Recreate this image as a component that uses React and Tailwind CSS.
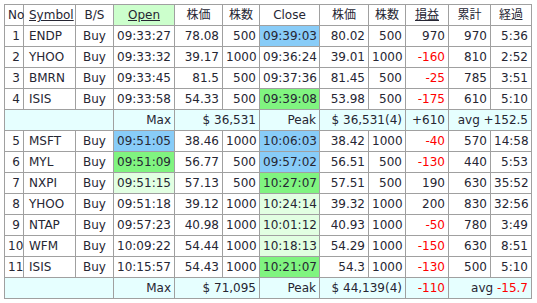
import React from "react";

const BLUE = "bg-[#88ccf8]";
const GREEN = "bg-[#80f480]";
const LIGHT = "bg-[#e2ffe2]";

const block1 = [
  { no: 1, sym: "ENDP", open: "09:33:27", op: "78.08", oq: 500, close: "09:39:03", cbg: BLUE, cp: "80.02", cq: 500, pl: 970, cum: 970, el: "5:36" },
  { no: 2, sym: "YHOO", open: "09:33:32", op: "39.17", oq: 1000, close: "09:36:24", cp: "39.01", cq: 1000, pl: -160, cum: 810, el: "2:52" },
  { no: 3, sym: "BMRN", open: "09:33:45", op: "81.5", oq: 500, close: "09:37:36", cp: "81.45", cq: 500, pl: -25, cum: 785, el: "3:51" },
  { no: 4, sym: "ISIS", open: "09:33:58", op: "54.33", oq: 500, close: "09:39:08", cbg: GREEN, cp: "53.98", cq: 500, pl: -175, cum: 610, el: "5:10" },
];

const block2 = [
  { no: 5, sym: "MSFT", open: "09:51:05", obg: BLUE, op: "38.46", oq: 1000, close: "10:06:03", cbg: BLUE, cp: "38.42", cq: 1000, pl: -40, cum: 570, el: "14:58" },
  { no: 6, sym: "MYL", open: "09:51:09", obg: GREEN, op: "56.77", oq: 500, close: "09:57:02", cbg: BLUE, cp: "56.51", cq: 500, pl: -130, cum: 440, el: "5:53" },
  { no: 7, sym: "NXPI", open: "09:51:15", obg: LIGHT, op: "57.13", oq: 500, close: "10:27:07", cbg: GREEN, cp: "57.51", cq: 500, pl: 190, cum: 630, el: "35:52" },
  { no: 8, sym: "YHOO", open: "09:51:18", op: "39.12", oq: 1000, close: "10:24:14", cbg: LIGHT, cp: "39.32", cq: 1000, pl: 200, cum: 830, el: "32:56" },
  { no: 9, sym: "NTAP", open: "09:57:23", op: "40.98", oq: 1000, close: "10:01:12", cbg: LIGHT, cp: "40.93", cq: 1000, pl: -50, cum: 780, el: "3:49" },
  { no: 10, sym: "WFM", open: "10:09:22", op: "54.44", oq: 1000, close: "10:18:13", cbg: LIGHT, cp: "54.29", cq: 1000, pl: -150, cum: 630, el: "8:51" },
  { no: 11, sym: "ISIS", open: "10:15:57", op: "54.43", oq: 1000, close: "10:21:07", cbg: GREEN, cp: "54.3", cq: 1000, pl: -130, cum: 500, el: "5:10" },
];

const td = "border border-[#a0a0a0] h-[21px] px-[3px] whitespace-nowrap";

function Row({ r }) {
  return (
    <tr>
      <td className={`${td} text-right`}>{r.no}</td>
      <td className={`${td} text-left pl-[5px]`}>{r.sym}</td>
      <td className={`${td} text-center`}>Buy</td>
      <td className={`${td} text-center ${r.obg || ""}`}>{r.open}</td>
      <td className={`${td} text-right`}>{r.op}</td>
      <td className={`${td} text-right`}>{r.oq}</td>
      <td className={`${td} text-center ${r.cbg || ""}`}>{r.close}</td>
      <td className={`${td} text-right`}>{r.cp}</td>
      <td className={`${td} text-right`}>{r.cq}</td>
      <td className={`${td} text-right ${r.pl < 0 ? "text-[#ff0000]" : ""}`}>{r.pl}</td>
      <td className={`${td} text-right`}>{r.cum}</td>
      <td className={`${td} text-right`}>{r.el}</td>
    </tr>
  );
}

function Summary({ max, peak, pl, avg }) {
  const neg = (v) => v.startsWith("-");
  return (
    <tr className="bg-[#e6ffff]">
      <td className={td} colSpan={3}></td>
      <td className={`${td} text-right`}>Max</td>
      <td className={`${td} text-right`} colSpan={2}>$ {max}</td>
      <td className={`${td} text-right`}>Peak</td>
      <td className={`${td} text-right`} colSpan={2}>$ {peak}</td>
      <td className={`${td} text-right ${neg(pl) ? "text-[#ff0000]" : ""}`}>{pl}</td>
      <td className={`${td} text-right`} colSpan={2}>
        avg <span className={neg(avg) ? "text-[#ff0000]" : ""}>{avg}</span>
      </td>
    </tr>
  );
}

export default function App() {
  const widths = [19, 52, 38, 61, 48, 37, 60, 49, 37, 43, 42, 41];
  return (
    <div
      className="w-[537px] h-[303px] bg-white pt-[4px] pl-[4px] text-[12px] text-[#262633]"
      style={{ fontFamily: '"DejaVu Sans", "Noto Sans CJK JP", sans-serif' }}
    >
      <table className="border-collapse table-fixed w-[528px]">
        <colgroup>
          {widths.map((w, i) => (
            <col key={i} style={{ width: w }} />
          ))}
        </colgroup>
        <thead>
          <tr>
            <th className={`${td} font-normal text-left px-[1px]`}>No</th>
            <th className={`${td} font-normal text-left pl-[5px]`}><span className="underline">Symbol</span></th>
            <th className={`${td} font-normal text-center`}>B/S</th>
            <th className={`${td} font-normal text-center bg-[#ccffcc]`}><span className="underline">Open</span></th>
            <th className={`${td} font-normal text-center`}>株価</th>
            <th className={`${td} font-normal text-center`}>株数</th>
            <th className={`${td} font-normal text-center`}>Close</th>
            <th className={`${td} font-normal text-center`}>株価</th>
            <th className={`${td} font-normal text-center`}>株数</th>
            <th className={`${td} font-normal text-center`}><span className="underline">損益</span></th>
            <th className={`${td} font-normal text-center`}>累計</th>
            <th className={`${td} font-normal text-center`}>経過</th>
          </tr>
        </thead>
        <tbody>
          {block1.map((r) => (
            <Row key={r.no} r={r} />
          ))}
          <Summary max="36,531" peak="36,531(4)" pl="+610" avg="+152.5" />
          {block2.map((r) => (
            <Row key={r.no} r={r} />
          ))}
          <Summary max="71,095" peak="44,139(4)" pl="-110" avg="-15.7" />
        </tbody>
      </table>
    </div>
  );
}
